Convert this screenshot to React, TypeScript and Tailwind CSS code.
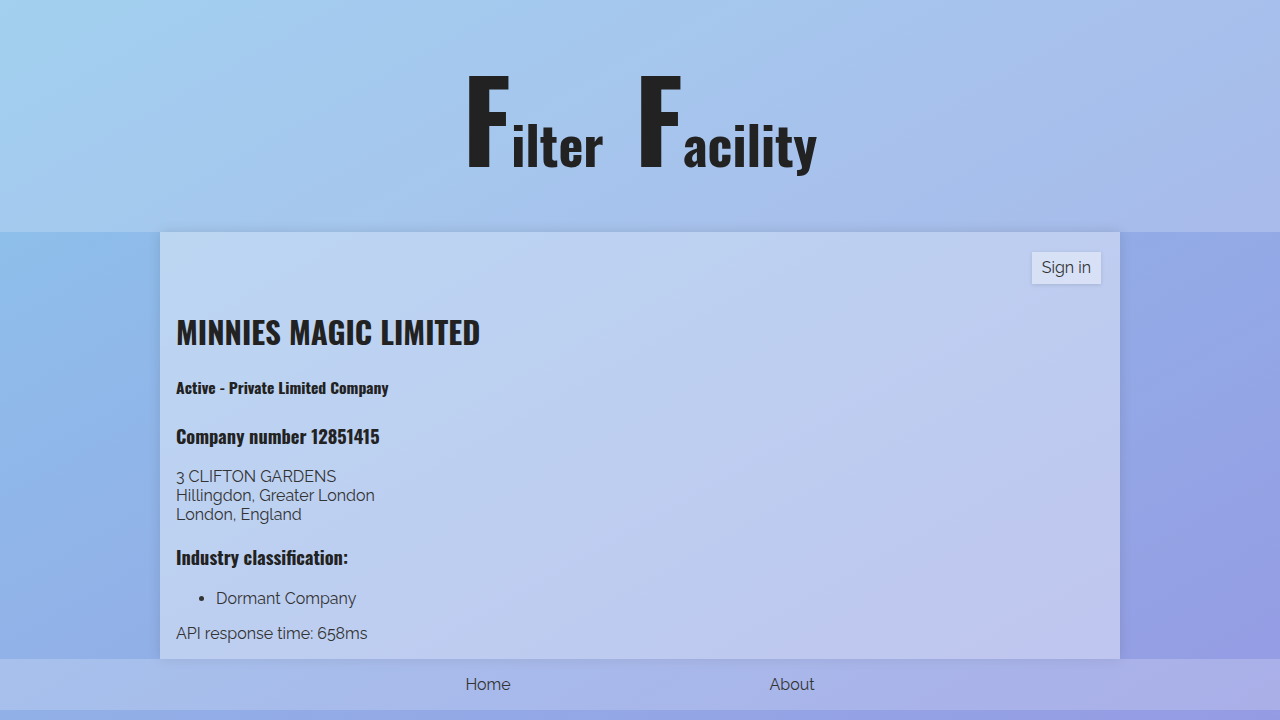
import React from "react";

const heading = { fontFamily: '"Oswald", "Liberation Sans Narrow", "DejaVu Sans Condensed", sans-serif' };

const App = () => {
  return (
    <div
      className="min-h-screen w-full flex flex-col bg-linear-to-br from-[#8cc5ec] to-[#959be3] text-[#333]"
      style={{ fontFamily: '"Raleway", "Lato", "Open Sans", sans-serif' }}
    >
      {/* Header */}
      <header className="h-[232px] bg-white/20 flex items-center justify-center">
        <h1 className="text-[#222] font-bold leading-none mt-[0px]" style={heading}>
          <span className="text-[112px]">F</span>
          <span className="text-[53px]">ilter</span>
          <span className="text-[112px] ml-[31px]">F</span>
          <span className="text-[53px]">acility</span>
        </h1>
      </header>

      {/* Main card */}
      <main className="w-[960px] mx-auto bg-white/40 shadow-[0_0_12px_rgba(0,0,0,0.12)] px-4 pt-[19px] pb-[13px]">
        <div className="flex justify-end pr-[3px]">
          <button className="bg-white/40 shadow-[0_1px_4px_rgba(0,0,0,0.12)] px-[10px] h-[32px] text-[16px] text-[#333] translate-y-[1px]">
            Sign in
          </button>
        </div>

        <h2 className="text-[31px] font-bold text-[#222] mt-[29px] leading-tight" style={heading}>
          MINNIES MAGIC LIMITED
        </h2>
        <h4 className="text-[15.7px] font-bold text-[#222] mt-[25px]" style={heading}>
          Active - Private Limited Company
        </h4>
        <h3 className="text-[18.4px] font-bold text-[#222] mt-[23px]" style={heading}>
          Company number 12851415
        </h3>

        <p className="text-[16px] leading-[19px] mt-[17px]">
          3 CLIFTON GARDENS
          <br />
          Hillingdon, Greater London
          <br />
          London, England
        </p>

        <h3 className="text-[18.4px] font-bold text-[#222] mt-[19px]" style={heading}>
          Industry classification:
        </h3>
        <ul className="list-disc pl-10 mt-[16px] text-[16px]">
          <li>Dormant Company</li>
        </ul>

        <p className="text-[16px] mt-[11px]">API response time: 658ms</p>
      </main>

      {/* Footer */}
      <footer className="h-[51px] bg-white/20">
        <nav className="w-[608px] h-full mx-auto flex items-center justify-around text-[16px] text-[#333] translate-y-[1px]">
          <a href="#">Home</a>
          <a href="#">About</a>
        </nav>
      </footer>
    </div>
  );
};

export default App;
